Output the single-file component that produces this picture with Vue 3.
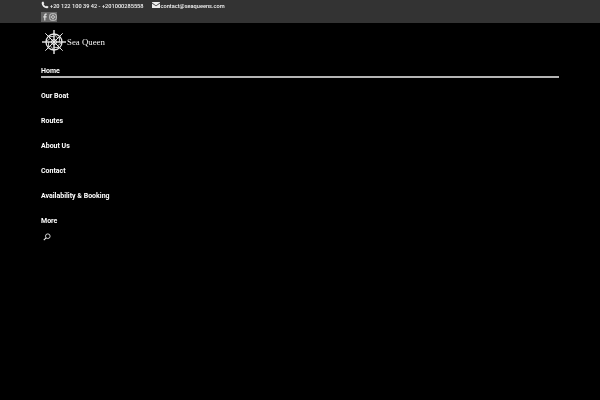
<script setup>
const items = ['Our Boat', 'Routes', 'About Us', 'Contact', 'Availability & Booking', 'More']
const spokes = [0, 45, 90, 135, 180, 225, 270, 315]
</script>

<template>
  <div class="page">
    <header class="topbar">
      <div class="contacts">
        <span class="contact">
          <svg class="ic-phone" viewBox="0 0 24 24" width="8" height="8"><path d="M6.6 1.5 10 6.600 7.800 9c1 2.700 4.400 6.100 7.200 7.200l2.400-2.200 5.100 3.400c-.6 2.800-2.400 4.600-4.800 4.600C9.500 22 2 14.500 2 6.300c0-2.400 1.800-4.200 4.600-4.800z" fill="#eee"/></svg>
          <span>+20 122 100 39 42 - +201000285558</span>
        </span>
        <span class="contact mail">
          <svg viewBox="0 0 16 12" width="8" height="6"><path d="M0 1.200V0h16v1.200L8 7zM0 3l8 5.600L16 3v9H0z" fill="#eee"/></svg>
          <span>contact@seaqueens.com</span>
        </span>
      </div>
      <div class="social">
        <span class="soc"><svg viewBox="0 0 10 10" width="8" height="8"><path d="M4 9.500V5.600H2.800V4H4V3c0-1.500.8-2.300 2.100-2.300h1.100v1.500h-.8c-.6 0-.7.300-.7.800V4h1.500l-.2 1.600H5.500v3.900z" fill="#ddd"/></svg></span>
        <span class="soc"><svg viewBox="0 0 10 10" width="8" height="8" fill="none" stroke="#ddd"><rect x="1" y="1" width="8" height="8" rx="2" stroke-width="1.100"/><circle cx="5" cy="5" r="1.800" stroke-width="1.100"/></svg></span>
      </div>
    </header>

    <main class="content">
      <div class="logo">
        <svg class="wheel" viewBox="0 0 26 26" width="26" height="26" fill="none" stroke="#e8e8e8">
          <circle cx="13" cy="13" r="8" stroke-width="1.300"/>
          <circle cx="13" cy="13" r="2.500" stroke-width="1"/>
          <line v-for="a in spokes" :key="a" x1="13" y1="1" x2="13" y2="25" stroke-width=".9" :transform="`rotate(${a} 13 13)`"/>
          <path v-for="a in spokes" :key="'k' + a" d="M13 5 L17 9.500" stroke-width=".8" :transform="`rotate(${a} 13 13)`"/>
        </svg>
        <span class="brand">Sea Queen</span>
      </div>

      <nav class="nav">
        <a class="item active">Home</a>
        <a v-for="item in items" :key="item" class="item">{{ item }}</a>
      </nav>

      <svg class="search" viewBox="0 0 10 10" width="8" height="8" fill="none" stroke="#eee"><circle cx="6" cy="4" r="2.900" stroke-width="1.100"/><line x1="3.900" y1="6.100" x2="1" y2="9" stroke-width="1.400"/></svg>
    </main>
  </div>
</template>

<style scoped>
.page {
  width: 600px;
  height: 400px;
  background: #000;
  overflow: hidden;
  color: #fff;
  font-family: Roboto, "Liberation Sans", sans-serif;
}
.topbar {
  height: 23px;
  box-sizing: border-box;
  background: #333;
  padding: 1px 41px 0;
}
.contacts {
  display: flex;
  height: 10px;
  align-items: center;
  font-size: 5.650px;
  font-weight: 500;
  color: #f4f4f4;
  will-change: transform;
}
.contact { display: flex; align-items: center; gap: 1px; }
.contact svg { margin-bottom: 2px; }
.mail { margin-left: 8px; }
.social { display: flex; margin-top: 1px; }
.soc {
  width: 8px;
  height: 10px;
  display: flex;
  align-items: center;
  justify-content: center;
  background: #666;
}
.content { padding: 5px 41px 0; }
.logo { display: flex; align-items: center; height: 27px; }
.brand {
  font-family: "Liberation Serif", serif;
  font-size: 8.800px;
  color: #f2f2f2;
  will-change: transform;
}
.nav { display: flex; flex-direction: column; gap: 15px; margin-top: 11px; will-change: transform; }
.item {
  font-size: 7px;
  font-weight: 700;
  line-height: 10px;
}
.active { position: relative; }
.active::after {
  content: "";
  position: absolute;
  left: 0;
  right: 0;
  top: 10px;
  height: 2px;
  background: #b4b4b4;
}
.search { display: block; margin: 7px 0 0 2px; }
</style>
